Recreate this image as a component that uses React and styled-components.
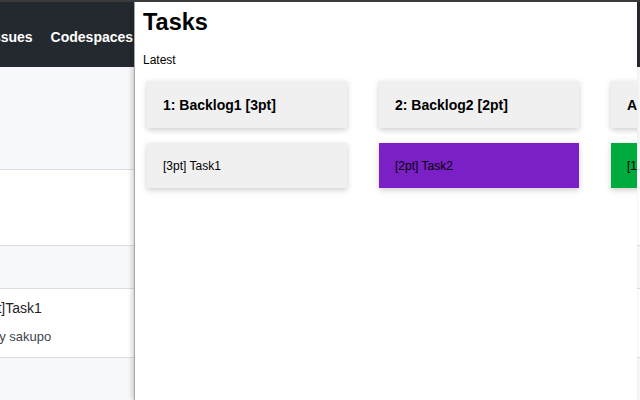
import styled, { createGlobalStyle } from "styled-components";

const GlobalStyle = createGlobalStyle`
  html, body {
    margin: 0;
    padding: 0;
    overflow: hidden;
    font-family: "Liberation Sans", Arial, sans-serif;
  }
`;

const Page = styled.div`
  position: relative;
  width: 640px;
  height: 400px;
  overflow: hidden;
  background: #f6f8fa;
  border-top: 2px solid #3a3a3a;
  box-sizing: border-box;
`;

const Header = styled.header`
  height: 65px;
  background: #24292f;
  display: flex;
  align-items: center;
  padding-top: 4px;
  box-sizing: border-box;
  overflow: hidden;
`;

const Nav = styled.nav`
  display: flex;
  gap: 18px;
  margin-left: -11px;
`;

const NavItem = styled.span`
  color: #ffffff;
  font-size: 14px;
  font-weight: bold;
  white-space: nowrap;
`;

const Band = styled.div`
  height: ${(p) => p.h}px;
  background: ${(p) => (p.light ? "#f6f8fa" : "#ffffff")};
  border-bottom: 1px solid #d8dee4;
  box-sizing: border-box;
`;

const IssueRow = styled.div`
  height: 69px;
  background: #ffffff;
  border-bottom: 1px solid #d8dee4;
  box-sizing: border-box;
  display: flex;
  flex-direction: column;
  padding-top: 11px;
  gap: 13px;
  overflow: hidden;
`;

const IssueTitle = styled.div`
  font-size: 14px;
  color: #1f2328;
  margin-left: -22px;
  white-space: nowrap;
`;

const IssueMeta = styled.div`
  font-size: 13px;
  color: #3d444d;
  margin-left: -8px;
  white-space: nowrap;
`;

const Panel = styled.aside`
  position: absolute;
  top: 0;
  left: 134px;
  right: 3px;
  bottom: 0;
  background: #ffffff;
  border-left: 1px solid #a8a8a8;
  box-shadow: -2px 0 5px rgba(0, 0, 0, 0.18);
  padding: 7px 0 0 8px;
  box-sizing: border-box;
  overflow: hidden;
`;

const Title = styled.h1`
  margin: 0;
  font-size: 23.5px;
  font-weight: bold;
  color: #000000;
`;

const Subtitle = styled.p`
  margin: 17px 0 0;
  font-size: 12px;
  color: #000000;
`;

const Board = styled.div`
  display: flex;
  gap: 32px;
  margin-top: 14px;
  padding-left: 4px;
`;

const Column = styled.div`
  flex: 0 0 200px;
  display: flex;
  flex-direction: column;
  gap: 15px;
`;

const ColumnHeader = styled.div`
  height: 47px;
  background: #f0f0f0;
  box-shadow: 0 2px 6px rgba(0, 0, 0, 0.2);
  display: flex;
  align-items: center;
  padding: 0 16px;
  font-size: 14px;
  font-weight: bold;
  color: #000000;
  white-space: nowrap;
  box-sizing: border-box;
`;

const TaskCard = styled.div`
  height: 45px;
  background: ${(p) => p.color};
  box-shadow: 0 2px 6px rgba(0, 0, 0, 0.2);
  display: flex;
  align-items: center;
  padding: 0 16px;
  font-size: 12px;
  color: #000000;
  white-space: nowrap;
  box-sizing: border-box;
`;

const columns = [
  { title: "1: Backlog1 [3pt]", task: "[3pt] Task1", color: "#f0f0f0" },
  { title: "2: Backlog2 [2pt]", task: "[2pt] Task2", color: "#7b1fc7" },
  { title: "A", task: "[1pt] Task3", color: "#00ab3e" },
];

export default function App() {
  return (
    <>
      <GlobalStyle />
      <Page>
        <Header>
          <Nav>
            <NavItem>Issues</NavItem>
            <NavItem>Codespaces</NavItem>
          </Nav>
        </Header>
        <Band h={103} light />
        <Band h={76} />
        <Band h={43} light />
        <IssueRow>
          <IssueTitle>[3pt]Task1</IssueTitle>
          <IssueMeta>by sakupo</IssueMeta>
        </IssueRow>

        <Panel>
          <Title>Tasks</Title>
          <Subtitle>Latest</Subtitle>
          <Board>
            {columns.map((c) => (
              <Column key={c.title}>
                <ColumnHeader>{c.title}</ColumnHeader>
                <TaskCard color={c.color}>{c.task}</TaskCard>
              </Column>
            ))}
          </Board>
        </Panel>
      </Page>
    </>
  );
}
